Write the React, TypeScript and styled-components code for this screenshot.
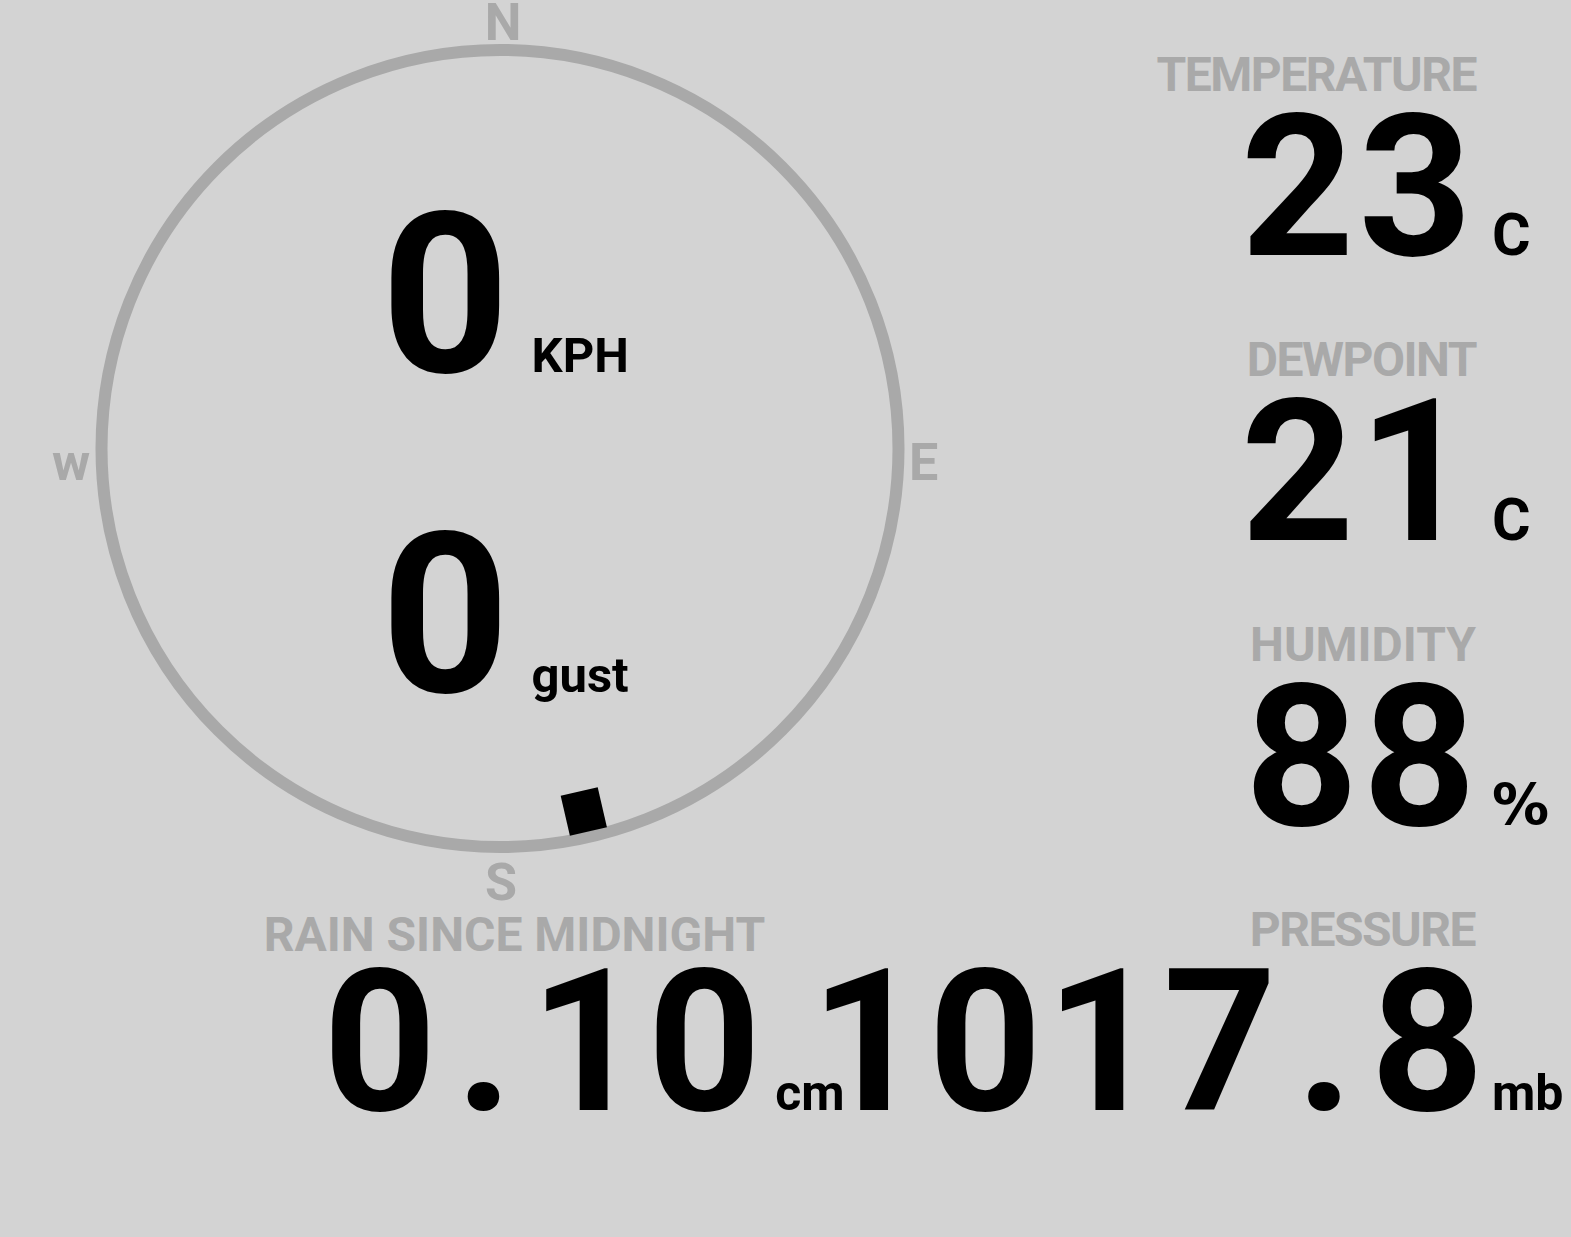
import styled, { createGlobalStyle } from "styled-components";

const GlobalStyle = createGlobalStyle`
  html, body {
    margin: 0;
    padding: 0;
    background: #d3d3d3;
  }
  body {
    font-family: Roboto, "Liberation Sans", sans-serif;
    font-weight: 700;
    color: #000;
  }
`;

const CX = 500;
const CY = 448.5;
const R = 398.5;
const windDirection = 167;

export default function App() {
  return (
    <>
      <GlobalStyle />
      <Page>
        <TopRow>
          <Compass>
            <Dial viewBox="0 0 960 905">
              <circle cx={CX} cy={CY} r={R} fill="none" stroke="#a9a9a9" strokeWidth="12" />
              <g fill="#a9a9a9" fontSize="52" fontWeight="700" fontFamily="Roboto, sans-serif">
                <text x="503" y="40" textAnchor="middle">N</text>
                <text x="909" y="480">E</text>
                <text x="501" y="900" textAnchor="middle">S</text>
                <text x="71" y="480" textAnchor="middle">w</text>
              </g>
              <g transform={`translate(${CX} ${CY}) rotate(${windDirection - 180})`}>
                <rect x="-19" y="352" width="38" height="41" fill="#000" />
              </g>
            </Dial>
            <Readings>
              <Reading>
                <WindValue>0</WindValue>
                <SmallUnit>KPH</SmallUnit>
              </Reading>
              <Reading>
                <WindValue>0</WindValue>
                <SmallUnit>gust</SmallUnit>
              </Reading>
            </Readings>
          </Compass>

          <Stats>
            <Stat $unitCol="79px" $gap="20px">
              <Label>TEMPERATURE</Label>
              <Value>23</Value>
              <Unit $size="59px">C</Unit>
            </Stat>
            <Stat $unitCol="79px" $gap="20px">
              <Label>DEWPOINT</Label>
              <Value>21</Value>
              <Unit $size="59px">C</Unit>
            </Stat>
            <Stat $unitCol="79px" $gap="16px">
              <Label $spacing="0px" $inset={4}>HUMIDITY</Label>
              <Value>88</Value>
              <Unit $size="57px" $wide>%</Unit>
            </Stat>
          </Stats>
        </TopRow>

        <BottomRow>
          <RainStat $unitCol="auto" $gap="14px">
            <Label $drop $spacing="0px">RAIN SINCE MIDNIGHT</Label>
            <Value>
              0<Dot>.</Dot>10
            </Value>
            <Unit $size="50px">cm</Unit>
          </RainStat>
          <Stat $unitCol="79px" $gap="8px">
            <Label $inset={13}>PRESSURE</Label>
            <Value>
              1017<Dot>.</Dot>8
            </Value>
            <Unit $size="50px">mb</Unit>
          </Stat>
        </BottomRow>
      </Page>
    </>
  );
}

const Page = styled.div`
  display: flex;
  flex-direction: column;
  width: 100%;
  min-height: 1237px;
`;

const TopRow = styled.div`
  display: flex;
  height: 905px;
`;

const Compass = styled.div`
  display: grid;
  flex: none;
  width: 960px;
  height: 905px;

  & > * {
    grid-area: 1 / 1;
  }
`;

const Dial = styled.svg`
  display: block;
  width: 960px;
  height: 905px;
  overflow: visible;
`;

const Readings = styled.div`
  display: flex;
  flex-direction: column;
  gap: 96px;
  padding: 184px 0 0 381px;
`;

const Reading = styled.div`
  display: flex;
  align-items: baseline;
  gap: 22px;
`;

const WindValue = styled.span`
  font-size: 224px;
  line-height: 224px;
`;

const SmallUnit = styled.span`
  font-size: 49px;
  line-height: 1;
`;

const Stats = styled.div`
  flex: 1;
  display: flex;
  flex-direction: column;
  align-items: flex-end;
  gap: 60px;
  padding-top: 50px;
`;

const Stat = styled.div<{ $unitCol: string; $gap: string }>`
  display: grid;
  grid-template-columns: auto ${(p) => p.$unitCol};
  column-gap: ${(p) => p.$gap};
`;

const RainStat = styled(Stat)`
  margin-right: -34px;
`;

const Label = styled.div<{ $drop?: boolean; $spacing?: string; $inset?: number }>`
  grid-column: 1;
  justify-self: end;
  font-size: 48px;
  line-height: 49px;
  letter-spacing: ${(p) => p.$spacing ?? "-1.5px"};
  margin-right: ${(p) => (p.$inset ?? 0) - 4}px;
  color: #a9a9a9;
  white-space: nowrap;
  margin-top: ${(p) => (p.$drop ? "5px" : "0")};
  margin-bottom: ${(p) => (p.$drop ? "-5px" : "0")};
`;

const Value = styled.div`
  grid-column: 1;
  grid-row: 2;
  justify-self: end;
  align-self: baseline;
  font-size: 198px;
  line-height: 176px;
  letter-spacing: 4px;
  margin-right: -4px;
  white-space: nowrap;
`;

const Dot = styled.span`
  margin: 0 13px 0 15px;
`;

const Unit = styled.div<{ $size: string; $wide?: boolean }>`
  grid-column: 2;
  grid-row: 2;
  align-self: baseline;
  font-family: ${(p) => (p.$wide ? '"DejaVu Sans", sans-serif' : "inherit")};
  font-size: ${(p) => p.$size};
  line-height: 1;
  white-space: nowrap;
`;

const BottomRow = styled.div`
  display: flex;
  justify-content: flex-end;
  align-items: flex-start;
`;
